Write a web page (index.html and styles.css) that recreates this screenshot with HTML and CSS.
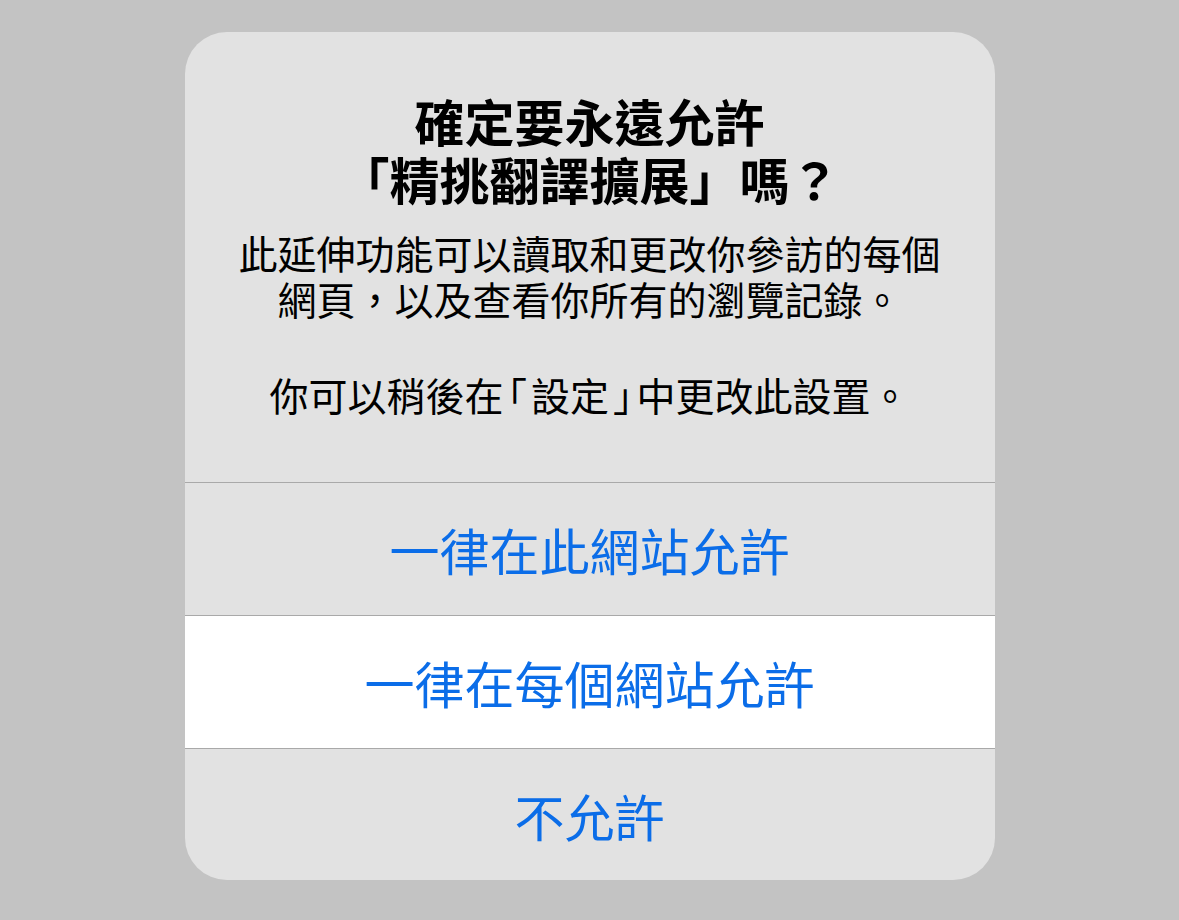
FILE: index.html
```html
<!DOCTYPE html>
<html lang="zh-Hant">
<head>
    <meta charset="UTF-8">
    <meta name="viewport" content="width=device-width, initial-scale=1.0">
    <title>延伸功能權限</title>
    <link rel="stylesheet" href="styles.css">
</head>
<body>
  <div class="alert">
    <div class="alert-header">
      <h1 class="alert-title">確定要永遠允許<br>「精挑翻譯擴展」嗎？</h1>
      <p class="alert-message">此延伸功能可以讀取和更改你參訪的每個<br>網頁，以及查看你所有的瀏覽記錄。</p>
      <p class="alert-message">你可以稍後在<span class="bracket">「</span>設定<span class="bracket">」</span>中更改此設置。</p>
    </div>
    <div class="alert-actions">
      <button class="alert-btn">一律在此網站允許</button>
      <button class="alert-btn alert-btn-selected">一律在每個網站允許</button>
      <button class="alert-btn">不允許</button>
    </div>
  </div>
</body>
</html>
```

FILE: styles.css
```css
body {
    margin: 0;
    font-family: "Noto Sans CJK TC", "Noto Sans", sans-serif;
    background-color: #c3c3c3;
    height: 920px;
    display: flex;
    justify-content: center;
    align-items: flex-start;
}

.alert {
    width: 810px;
    margin-top: 32px;
    background-color: #e2e2e2;
    border-radius: 42px;
    overflow: hidden;
}

.alert-header {
    padding: 59px 40px 65px;
    text-align: center;
    color: #000000;
}

.alert-title {
    margin: 0 0 22px;
    font-size: 50px;
    line-height: 58px;
    font-weight: 700;
}

.alert-message {
    margin: 0;
    font-size: 39px;
    line-height: 46px;
    font-weight: 400;
}

.alert-message + .alert-message {
    margin-top: 50px;
}

.bracket {
    font-feature-settings: "halt";
    margin: 0 4px;
}

.alert-actions {
    display: flex;
    flex-direction: column;
}

.alert-btn {
    height: 133px;
    padding: 0;
    border: none;
    border-top: 1px solid #a9a9a9;
    background-color: transparent;
    font-family: inherit;
    font-size: 50px;
    color: #0b6de8;
    cursor: pointer;
}

.alert-btn:last-child {
    height: 132px;
}

.alert-btn-selected {
    background-color: #ffffff;
}
```
